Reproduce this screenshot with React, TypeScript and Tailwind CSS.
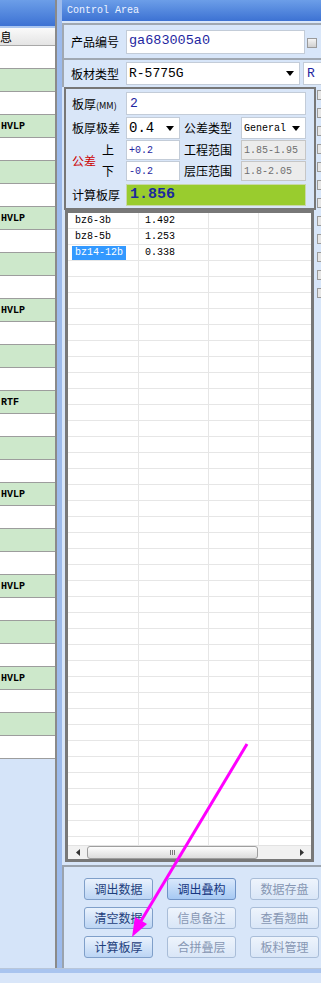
import React from "react";

const cjk = "font-['Noto_Sans_CJK_SC',sans-serif]";
const mono = "font-['Liberation_Mono',monospace]";

// labels shown in the cut-off list on the left
const tagged: Record<number, string> = {
  3: "HVLP",
  7: "HVLP",
  11: "HVLP",
  15: "RTF",
  19: "HVLP",
  23: "HVLP",
  27: "HVLP",
};

const gridData = [
  { name: "bz6-3b", value: "1.492", selected: false },
  { name: "bz8-5b", value: "1.253", selected: false },
  { name: "bz14-12b", value: "0.338", selected: true },
];

function Caret() {
  return (
    <svg width="8" height="5" viewBox="0 0 8 5" className="shrink-0">
      <path d="M0 0h8L4 5z" fill="#000" />
    </svg>
  );
}

function LeftPanel() {
  return (
    <div className="w-[57px] shrink-0 border-r-2 border-[#8a8a8a] flex flex-col overflow-hidden">
      <div className="h-[26px] shrink-0 bg-linear-to-b from-[#6c9ee8] to-[#3d72d3]" />
      <div className="h-[2px] shrink-0 bg-[#a9c5f0]" />
      <div
        className={`h-[18px] shrink-0 flex items-center bg-linear-to-b from-[#fafafa] to-[#e4e4e4] border-b border-[#a8a8a8] text-[12px] text-black ${cjk}`}
      >
        <span>息</span>
      </div>
      {Array.from({ length: 31 }).map((_, i) => (
        <div
          key={i}
          className={`h-[23px] shrink-0 flex items-center border-b border-[#9d9d9d] pl-[1px] text-[10px] font-bold text-black ${mono} ${
            i % 2 === 1 ? "bg-[#cde8cb]" : "bg-white"
          }`}
        >
          {tagged[i] ?? ""}
        </div>
      ))}
      <div className="flex-1 bg-[#d5e4f9]" />
    </div>
  );
}

function Label({ children, w = "w-[62px]" }: { children: React.ReactNode; w?: string }) {
  return (
    <div className={`${w} shrink-0 pl-[7px] text-[12px] text-black ${cjk}`}>{children}</div>
  );
}

function GroupBox() {
  return (
    <div className="h-[123px] border-2 border-[#777] bg-[#d9e6f8] flex flex-col pt-[3px]">
      {/* 板厚 */}
      <div className="flex items-center h-[23px]">
        <div className={`w-[60px] shrink-0 pl-[6px] text-[12px] text-black ${cjk}`}>
          板厚<span className="text-[9px]">(MM)</span>
        </div>
        <div
          className={`w-[180px] h-[23px] bg-white border border-[#c3ccd8] flex items-center pl-[3px] text-[13px] text-[#1e26a0] ${mono}`}
        >
          2
        </div>
      </div>

      {/* 板厚极差 / 公差类型 */}
      <div className="flex items-center h-[22px] mt-[2px]">
        <div className={`w-[60px] shrink-0 pl-[6px] text-[12px] text-black ${cjk}`}>板厚极差</div>
        <div
          className={`w-[54px] h-[22px] bg-white border border-[#c3ccd8] flex items-center justify-between pl-[2px] pr-[5px] text-[14px] text-black ${mono}`}
        >
          0.4
          <Caret />
        </div>
        <div className={`w-[57px] ml-[4px] text-[12px] text-black ${cjk}`}>公差类型</div>
        <div
          className={`w-[65px] h-[22px] bg-white border border-[#c3ccd8] flex items-center justify-between pl-[2px] pr-[5px] text-[10px] text-black ${mono}`}
        >
          General
          <Caret />
        </div>
      </div>

      {/* 公差 上 / 下 */}
      <div className="flex mt-[1px]">
        <div className="w-[60px] shrink-0 flex">
          <div className={`w-[34px] pl-[6px] self-center text-[12px] text-[#cc0000] ${cjk}`}>公差</div>
          <div className={`flex flex-col gap-[1px] pl-[2px] text-[12px] text-black ${cjk}`}>
            <div className="h-[20px] flex items-center">上</div>
            <div className="h-[20px] flex items-center">下</div>
          </div>
        </div>
        <div className="flex flex-col gap-[1px]">
          {[
            ["+0.2", "工程范围", "1.85-1.95"],
            ["-0.2", "层压范围", "1.8-2.05"],
          ].map(([v, l, r]) => (
            <div key={l} className="flex items-center h-[20px]">
              <div
                className={`w-[54px] h-[20px] bg-white border border-[#c3ccd8] flex items-center pl-[2px] text-[10px] text-[#1e26a0] ${mono}`}
              >
                {v}
              </div>
              <div className={`w-[57px] ml-[4px] text-[12px] text-black ${cjk}`}>{l}</div>
              <div
                className={`w-[65px] h-[20px] bg-[#ececec] border border-[#c6c6c6] flex items-center pl-[2px] text-[10px] text-[#707070] ${mono}`}
              >
                {r}
              </div>
            </div>
          ))}
        </div>
      </div>

      {/* 计算板厚 */}
      <div className="flex items-center h-[22px] mt-[3px]">
        <div className={`w-[60px] shrink-0 pl-[6px] text-[12px] text-black ${cjk}`}>计算板厚</div>
        <div
          className={`w-[180px] h-[22px] bg-[#99cc2e] border border-[#c9d8a8] flex items-center pl-[3px] text-[15px] font-bold text-[#1b2a9e] ${mono}`}
        >
          1.856
        </div>
      </div>
    </div>
  );
}

function DataGrid() {
  const cols = ["w-[71px]", "w-[70px]", "w-[50px]", "w-[52px]"];
  return (
    <div className="h-[652px] ml-[1px] w-[249px] border-[3px] border-[#787878] bg-white flex flex-col">
      <div className="h-[632px] overflow-hidden">
        {Array.from({ length: 40 }).map((_, i) => {
          const d = gridData[i];
          return (
            <div key={i} className={`h-[16px] flex border-b border-[#e6e6e6] text-[10px] text-black ${mono}`}>
              <div className={`${cols[0]} border-r border-[#e6e6e6] pl-[4px] leading-[15px]`}>
                {d && (
                  <span
                    className={`inline-block px-[3px] h-[14px] leading-[14px] ${
                      d.selected ? "bg-[#3399ff] text-white" : ""
                    }`}
                  >
                    {d.name}
                  </span>
                )}
              </div>
              <div className={`${cols[1]} border-r border-[#e6e6e6] pl-[6px] leading-[15px]`}>
                {d?.value}
              </div>
              <div className={`${cols[2]} border-r border-[#e6e6e6]`} />
              <div className={cols[3]} />
            </div>
          );
        })}
      </div>
      {/* horizontal scrollbar */}
      <div className="h-[14px] flex items-center bg-[#f1f1f1] border-t border-[#e2e2e2]">
        <div className="w-[17px] h-full flex items-center justify-center pl-[3px]">
          <svg width="4" height="7" viewBox="0 0 4 7">
            <path d="M4 0v7L0 3.5z" fill="#333" />
          </svg>
        </div>
        <div className="w-[171px] h-[13px] ml-[2px] rounded-[3px] border border-[#9e9e9e] bg-linear-to-b from-[#fdfdfd] to-[#dcdcdc] flex items-center justify-center gap-[1px]">
          <div className="w-[1px] h-[5px] bg-[#7a7a7a]" />
          <div className="w-[1px] h-[5px] bg-[#7a7a7a]" />
          <div className="w-[1px] h-[5px] bg-[#7a7a7a]" />
        </div>
        <div className="flex-1" />
        <div className="w-[17px] h-full flex items-center justify-center pr-[2px]">
          <svg width="4" height="7" viewBox="0 0 4 7">
            <path d="M0 0v7l4-3.5z" fill="#333" />
          </svg>
        </div>
      </div>
    </div>
  );
}

type Btn = { label: string; kind: "on" | "hot" | "off" };

const buttons: Btn[] = [
  { label: "调出数据", kind: "on" },
  { label: "调出叠构", kind: "hot" },
  { label: "数据存盘", kind: "off" },
  { label: "清空数据", kind: "on" },
  { label: "信息备注", kind: "off" },
  { label: "查看翘曲", kind: "off" },
  { label: "计算板厚", kind: "on" },
  { label: "合拼叠层", kind: "off" },
  { label: "板料管理", kind: "off" },
];

const btnStyle = {
  on: "border-[#7f9fc9] from-[#eaf2fd] to-[#bcd5f4] text-[#1e3f7c]",
  hot: "border-[#6f93c6] from-[#d9e8fb] to-[#a6c9f3] text-[#163680]",
  off: "border-[#a9bdd8] from-[#eef4fc] to-[#d9e6f7] text-[#8797b3]",
};

function ButtonPanel() {
  return (
    <div className="h-[103px] mt-[3px] border-t-2 border-l-2 border-[#9aa3ae] pl-[20px] pt-[11px]">
      <div className="grid grid-cols-[69px_69px_69px] gap-x-[14px] gap-y-[7px]">
        {buttons.map((b) => (
          <div
            key={b.label}
            className={`h-[22px] rounded-[3px] border bg-linear-to-b flex items-center justify-center text-[12px] ${cjk} ${btnStyle[b.kind]}`}
          >
            {b.label}
          </div>
        ))}
      </div>
    </div>
  );
}

function RightPanel() {
  return (
    <div className="w-[280px] shrink-0 flex flex-col">
      <div
        className={`h-[21px] shrink-0 bg-linear-to-b from-[#6c9ee8] to-[#3d72d3] flex items-center pl-[5px] text-[10px] text-[#eef3ff] ${mono}`}
      >
        Control Area
      </div>
      <div className="h-[2px] shrink-0" />

      {/* 产品编号 */}
      <div className="h-[35px] shrink-0 border-t-2 border-l-2 border-[#a0a8b2] flex items-center">
        <Label>产品编号</Label>
        <div
          className={`w-[179px] h-[24px] bg-white border border-[#c3ccd8] flex items-center pl-[2px] text-[13.5px] text-[#1e26a0] ${mono}`}
        >
          ga683005a0
        </div>
        <div className="w-[10px] h-[10px] ml-[2px] mt-[3px] border border-[#9a9a9a] bg-linear-to-b from-[#f4f4f4] to-[#d0d0d0]" />
      </div>

      {/* 板材类型 */}
      <div className="h-[29px] shrink-0 border-t-2 border-l-2 border-[#a0a8b2] flex items-center">
        <Label>板材类型</Label>
        <div
          className={`w-[179px] h-[23px] bg-white border border-[#c3ccd8] flex items-center justify-between pl-[2px] pr-[5px] text-[13px] text-black ${mono}`}
        >
          R-5775G
          <Caret />
        </div>
        <div
          className={`w-[40px] h-[23px] ml-[3px] bg-white border border-[#c3ccd8] flex items-center pl-[3px] text-[13px] text-[#1e26a0] ${mono}`}
        >
          R
        </div>
      </div>

      <div className="flex">
        <div className="w-[254px] shrink-0 pl-[2px] flex flex-col">
          <GroupBox />
          <DataGrid />
        </div>
        <div className="flex flex-col gap-[8px] pt-[3px] pl-[1px]">
          {Array.from({ length: 12 }).map((_, i) => (
            <div key={i} className="w-[10px] h-[10px] border border-[#9a9a9a] bg-[#e6e6e6]" />
          ))}
        </div>
      </div>

      <ButtonPanel />
    </div>
  );
}

export default function App() {
  return (
    <div className="relative w-[321px] h-[983px] overflow-hidden bg-[#d8e6f9] flex flex-col">
      <div className="flex h-[968px] shrink-0">
        <LeftPanel />
        <div className="w-[5px] shrink-0 bg-[#9dbbec]" />
        <RightPanel />
      </div>
      <div className="h-[15px] flex flex-col">
        <div className="h-[1px] bg-[#b8c6da]" />
        <div className="h-[4px] bg-[#a9c4ef]" />
        <div className="flex-1 bg-[#d9e6f9]" />
      </div>

      {/* annotation arrow */}
      <svg
        className="absolute left-0 top-0 pointer-events-none"
        width="321"
        height="983"
        viewBox="0 0 321 983"
      >
        <line x1="247" y1="744" x2="141" y2="921" stroke="#ff00ff" strokeWidth="3" />
        <polygon points="132,937 147,924 135,917" fill="#ff00ff" />
      </svg>
    </div>
  );
}
